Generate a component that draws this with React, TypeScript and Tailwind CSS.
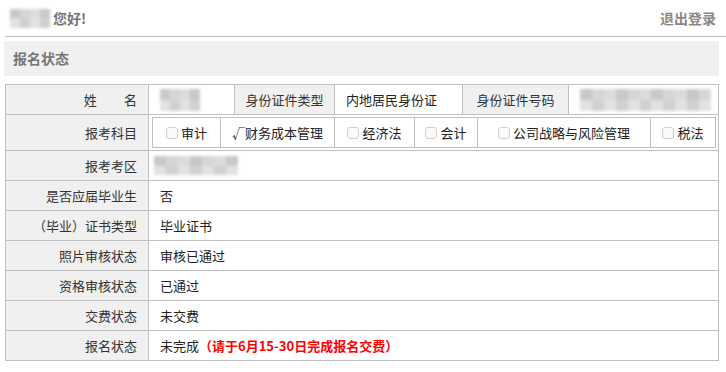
const font = { fontFamily: '"Noto Sans CJK SC", "Noto Sans", sans-serif' };

function Blur({ w, h }: { w: number; h: number }) {
  return (
    <div className="flex overflow-hidden blur-[1.5px]" style={{ width: w, height: h }}>
      {Array.from({ length: Math.ceil(w / 12) }).map((_, i) => (
        <div key={i} className="flex-1 flex flex-col">
          <div className={i % 3 === 0 ? 'flex-1 bg-[#c8c8c8]' : i % 3 === 1 ? 'flex-1 bg-[#d6d6d6]' : 'flex-1 bg-[#dcdcde]'} />
          <div className={i % 2 === 0 ? 'flex-1 bg-[#e2e2e2]' : 'flex-1 bg-[#d0d0d0]'} />
        </div>
      ))}
    </div>
  );
}

function Box() {
  return <span className="inline-block w-[12px] h-[12px] border border-[#d0d0d0] rounded-[3px] bg-[#fafafa] mr-[3px] align-[-1px]" />;
}

const label = 'bg-[#f0f0f0] border border-[#c0c0c0] text-right pr-[11px] h-[30px] text-[#333]';
const cell = 'border border-[#c0c0c0] pl-[11px] h-[30px] text-[#222]';

export default function App() {
  const rows: [string, React.ReactNode][] = [
    ['是否应届毕业生', '否'],
    ['（毕业）证书类型', '毕业证书'],
    ['照片审核状态', '审核已通过'],
    ['资格审核状态', '已通过'],
    ['交费状态', '未交费'],
    [
      '报名状态',
      <>
        未完成<span className="text-[#ff0000] font-bold">（请于6月15-30日完成报名交费）</span>
      </>,
    ],
  ];
  return (
    <div className="w-[726px] h-[372px] bg-white text-[13px]" style={font}>
      <div className="ml-[5px] h-[37px] border-b border-[#bbb] flex items-center justify-between pr-[10px] text-[14px]">
        <div className="flex items-center">
          <div className="ml-[5px] mr-[3px]">
            <Blur w={40} h={19} />
          </div>
          <span className="font-bold text-[#777]">您好!</span>
        </div>
        <span className="font-bold text-[#888]">退出登录</span>
      </div>
      <div className="mt-[4px] ml-[4px] w-[715px] h-[35px] bg-[#f0f0f0] flex items-center pl-[9px] font-bold text-[#777] text-[14px]">
        报名状态
      </div>
      <table className="ml-[5px] mt-[8px] table-fixed border-collapse w-[713px]">
        <colgroup>
          <col className="w-[143px]" />
          <col className="w-[86px]" />
          <col className="w-[100px]" />
          <col className="w-[128px]" />
          <col className="w-[106px]" />
          <col className="w-[150px]" />
        </colgroup>
        <tbody>
          <tr>
            <td className={label}>
              <span className="tracking-[2.1em] mr-[-2.1em]">姓名</span>
            </td>
            <td className={cell}>
              <Blur w={40} h={22} />
            </td>
            <td className="bg-[#f0f0f0] border border-[#c0c0c0] text-center text-[#333]">身份证件类型</td>
            <td className="border border-[#c0c0c0] pl-[11px] text-[#222]">内地居民身份证</td>
            <td className="bg-[#f0f0f0] border border-[#c0c0c0] text-center text-[#333]">身份证件号码</td>
            <td className="border border-[#c0c0c0] pl-[11px]">
              <Blur w={131} h={22} />
            </td>
          </tr>
          <tr>
            <td className={label + ' !h-[35px]'}>报考科目</td>
            <td colSpan={5} className="border border-[#c0c0c0] px-[3px] py-[2px]">
              <table className="table-fixed border-collapse w-[563px] text-[#222]">
                <colgroup>
                  <col className="w-[68px]" />
                  <col className="w-[114px]" />
                  <col className="w-[80px]" />
                  <col className="w-[63px]" />
                  <col className="w-[173px]" />
                  <col className="w-[65px]" />
                </colgroup>
                <tbody>
                  <tr>
                    <td className="border border-[#c0c0c0] h-[30px] text-center"><Box />审计</td>
                    <td className="border border-[#c0c0c0] text-center">√财务成本管理</td>
                    <td className="border border-[#c0c0c0] text-center"><Box />经济法</td>
                    <td className="border border-[#c0c0c0] text-center"><Box />会计</td>
                    <td className="border border-[#c0c0c0] text-center"><Box />公司战略与风险管理</td>
                    <td className="border border-[#c0c0c0] text-center"><Box />税法</td>
                  </tr>
                </tbody>
              </table>
            </td>
          </tr>
          <tr>
            <td className={label}>报考考区</td>
            <td colSpan={5} className="border border-[#c0c0c0] pl-[5px] h-[30px]">
              <Blur w={84} h={19} />
            </td>
          </tr>
          {rows.map(([k, v]) => (
            <tr key={k}>
              <td className={label}>{k}</td>
              <td colSpan={5} className={cell}>{v}</td>
            </tr>
          ))}
        </tbody>
      </table>
    </div>
  );
}
